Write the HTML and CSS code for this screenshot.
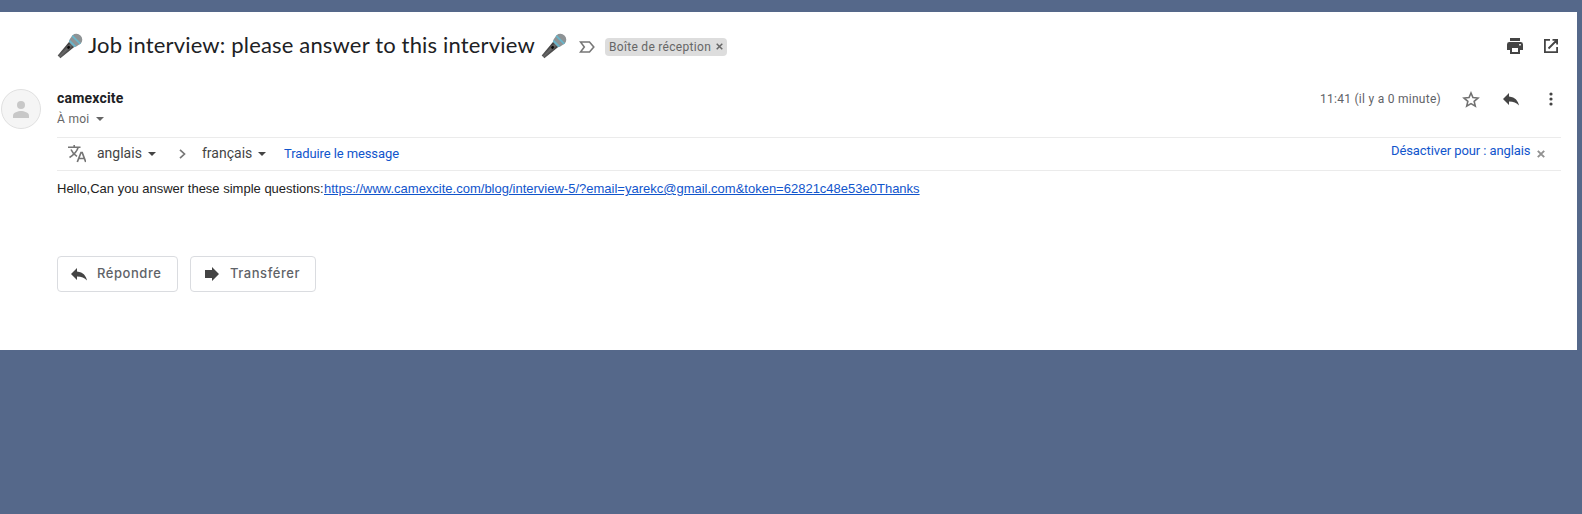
FILE: index.html
```html
<!DOCTYPE html>
<html lang="fr">
<head>
<meta charset="utf-8">
<title>Job interview</title>
<link rel="stylesheet" href="styles.css">
</head>
<body>
<svg class="defs" width="0" height="0" aria-hidden="true">
  <defs>
    <linearGradient id="handle" x1="0" y1="0" x2="1" y2="0">
      <stop offset="0" stop-color="#303030"/><stop offset=".5" stop-color="#686868"/><stop offset="1" stop-color="#373737"/>
    </linearGradient>
    <symbol id="mic" viewBox="0 0 26 26">
      <g transform="rotate(45 13 13)">
        <path d="M9.300 9.500h7.400l-1.800 19h-3.800z" fill="url(#handle)"/>
        <rect x="11.800" y="13.500" width="2.400" height="3" rx="1.200" fill="#050505"/>
        <path d="M7.200 3.500a5.800 5.300 0 0 1 11.600 0l-.9 5-1.200 2.400H9.300l-1.200-2.400z" fill="#8e9395"/>
        <path d="M7.200 3.300h11.600v1.900H7.400zM8.300 8.700h9.400l-1 2.100H9.300z" fill="#69b5ca"/>
      </g>
    </symbol>
    <symbol id="reply" viewBox="0 0 16 13">
      <path d="M6 3.500V0L0 6l6 6V8.500c4.500 0 7.600 1.200 10 4C15 8 12.500 4.300 6 3.500z"/>
    </symbol>
  </defs>
</svg>
<main class="panel">
  <header class="subject-row">
    <h1 class="subject"><svg class="mic" width="26" height="26"><use href="#mic"/></svg><span class="title">Job interview: please answer to this interview</span><svg class="mic" width="26" height="26"><use href="#mic"/></svg></h1>
    <svg class="important" width="16" height="12" viewBox="0 0 16 12"><path d="M1.500 1h9L14.800 6l-4.300 5h-9l3.800-5z" fill="none" stroke="#777" stroke-width="1.600"/></svg>
    <span class="chip"><span class="chip-text">Boîte de réception</span><svg width="7" height="7" viewBox="0 0 7 7"><path d="M.7.7l5.600 5.600M6.300.7L.7 6.300" stroke="#666" stroke-width="1.500"/></svg></span>
    <span class="window-actions">
      <svg width="16" height="16" viewBox="0 0 16 16"><path d="M3 0h10v3H3zM2.400 4h11.200Q16 4 16 6.400V12h-3v4H3v-4H0V6.400Q0 4 2.400 4zM5 10v4h6v-4zM12.200 6v1.600h1.600V6z" fill="#444" fill-rule="evenodd"/></svg>
      <svg width="14" height="14" viewBox="0 0 14 14"><path d="M6 .9H.9v12.200h12.200V8M8.500.9h4.600v4.600M13 1L4.500 9.500" fill="none" stroke="#444" stroke-width="1.800"/></svg>
    </span>
  </header>
  <section class="sender-row">
    <svg class="avatar" width="40" height="40" viewBox="0 0 40 40"><circle cx="20" cy="20" r="19.500" fill="#f5f5f5" stroke="#e0e0e0"/><circle cx="20" cy="16" r="4" fill="#c8c8c8"/><path d="M12 29v-2.500c0-3 5-4.500 8-4.500s8 1.500 8 4.500V29z" fill="#c8c8c8"/></svg>
    <div class="sender">
      <span class="name">camexcite</span>
      <span class="to"><span class="to-text">À moi</span><i class="caret light"></i></span>
    </div>
    <div class="meta">
      <span class="date">11:41 (il y a 0 minute)</span>
      <svg class="star" width="18" height="17" viewBox="0 0 18 17"><path d="M9 2l1.950 4.600 5 .430-3.800 3.280 1.150 4.870L9 12.600l-4.300 2.580 1.150-4.870L2.050 7.030l5-.430z" fill="none" stroke="#717171" stroke-width="1.600"/></svg>
      <svg class="reply" width="16" height="13"><use href="#reply"/></svg>
      <svg class="more" width="4" height="14" viewBox="0 0 4 14"><circle cx="2" cy="2" r="1.600"/><circle cx="2" cy="7" r="1.600"/><circle cx="2" cy="12" r="1.600"/></svg>
    </div>
  </section>
  <section class="translate">
    <svg width="18" height="18" viewBox="0 0 18 18"><path d="M0 2.300h12.500M6.200 0v2.300M10.200 2.300C9 6.500 5.500 10 1.500 12.500M3 4.500c1 2.500 3.200 5 6 6.800" fill="none" stroke="#757575" stroke-width="1.600"/><path d="M9.300 17L13 7.500h1.200L17.700 17M10.800 13.500h5.500" fill="none" stroke="#757575" stroke-width="1.700"/></svg>
    <span class="lang from">anglais</span><i class="caret"></i>
    <svg class="chevron" width="7" height="10" viewBox="0 0 7 10"><path d="M1 .8L5.500 5 1 9.200" fill="none" stroke="#777" stroke-width="1.700"/></svg>
    <span class="lang target">français</span><i class="caret"></i>
    <a class="do-translate">Traduire le message</a>
    <a class="disable">Désactiver pour : anglais</a>
    <svg class="close" width="8" height="8" viewBox="0 0 8 8"><path d="M.8.8l6.400 6.400M7.200.8L.8 7.200" stroke="#919191" stroke-width="1.900"/></svg>
  </section>
  <p class="message"><span class="hello">Hello,Can you answer these simple questions:</span><a class="link">https://www.camexcite.com/blog/interview-5/?email=yarekc@gmail.com&amp;token=62821c48e53e0Thanks</a></p>
  <footer class="actions">
    <button class="action answer"><svg width="16" height="13"><use href="#reply"/></svg><span>Répondre</span></button>
    <button class="action forward"><svg width="14" height="14" viewBox="0 0 14 14"><path d="M0 3h7V0l7 7-7 7v-3H0z"/></svg><span>Transférer</span></button>
  </footer>
</main>
</body>
</html>
```
FILE: styles.css
```css
* { box-sizing: border-box; }
body { margin: 0; padding-top: 12px; height: 514px; overflow: hidden; background: #55688a; font-family: Roboto, sans-serif; color: #202124; }
.defs { display: block; }
svg { flex: none; }
.panel { width: 1577px; height: 338px; background: #fff; }
.subject-row { height: 69px; display: flex; align-items: center; padding: 0 19px 1px 57px; }
.subject { display: flex; align-items: center; margin: 0; font: 400 22px/28px Lato, sans-serif; letter-spacing: .17px; }
.mic { margin-top: -1px; }
.title { width: 447px; margin: -2px 6px 0 5px; white-space: nowrap; }
.important { margin: 1px 0 0 12px; }
.chip { display: flex; align-items: center; width: 122px; height: 18px; margin: 1px 0 0 10px; padding-left: 4px; background: #ddd; border-radius: 4px; font-size: 12px; letter-spacing: .3px; color: #666; }
.chip-text { width: 107px; white-space: nowrap; }
.window-actions { display: flex; align-items: center; gap: 21px; margin-left: auto; }
.sender-row { height: 56px; display: flex; padding: 8px 0 0 1px; }
.sender { margin-left: 16px; display: flex; flex-direction: column; }
.name { font-size: 14px; line-height: 18px; height: 20px; font-weight: 700; letter-spacing: .2px; }
.to { display: flex; align-items: center; font-size: 12px; line-height: 20px; letter-spacing: .3px; color: #666; }
.to-text { width: 39px; }
.caret { width: 8px; height: 4px; background: #444; clip-path: polygon(0 0, 100% 0, 50% 100%); }
.caret.light { background: #666; }
.meta { display: flex; align-items: center; height: 20px; margin-left: auto; padding-right: 24px; fill: #444; }
.date { width: 142px; font-size: 12px; letter-spacing: .27px; color: #5f6368; white-space: nowrap; }
.reply { margin-left: 23px; }
.more { margin-left: 30px; }
.translate { display: flex; align-items: center; height: 34px; margin: 0 16px 0 57px; padding: 0 16px 0 11px; border: solid #ebebeb; border-width: 1px 0; }
.lang { margin-top: -2px; font-size: 14px; color: #444; white-space: nowrap; }
.from { width: 51px; margin-left: 11px; }
.chevron { margin: 0 16px 0 23px; }
.target { width: 56px; }
.do-translate { margin: -2px 0 0 18px; font-size: 13px; letter-spacing: -.1px; color: #15c; }
.disable { width: 146px; margin: -8px 0 0 auto; font-size: 13px; letter-spacing: -.09px; color: #15c; white-space: nowrap; }
.message { margin: 8px 0 0 57px; height: 20px; display: flex; font: 13px/20px "Liberation Sans", Arial, sans-serif; color: #222; white-space: nowrap; }
.hello { width: 267px; }
.link { width: 595px; color: #15c; text-decoration: underline; }
.actions { display: flex; gap: 12px; margin: 57px 0 0 57px; }
.action { display: flex; align-items: center; height: 36px; padding: 0 0 0 13px; border: 1px solid #dadce0; border-radius: 4px; background: #fff; font: 500 13px Inter, sans-serif; letter-spacing: .55px; color: #5f6368; fill: #444; }
.action span { margin-top: -2px; }
.answer { width: 121px; }
.answer span { margin-left: 10px; }
.forward { width: 126px; }
.forward svg { margin-left: 1px; }
.forward span { margin-left: 11px; }
```
